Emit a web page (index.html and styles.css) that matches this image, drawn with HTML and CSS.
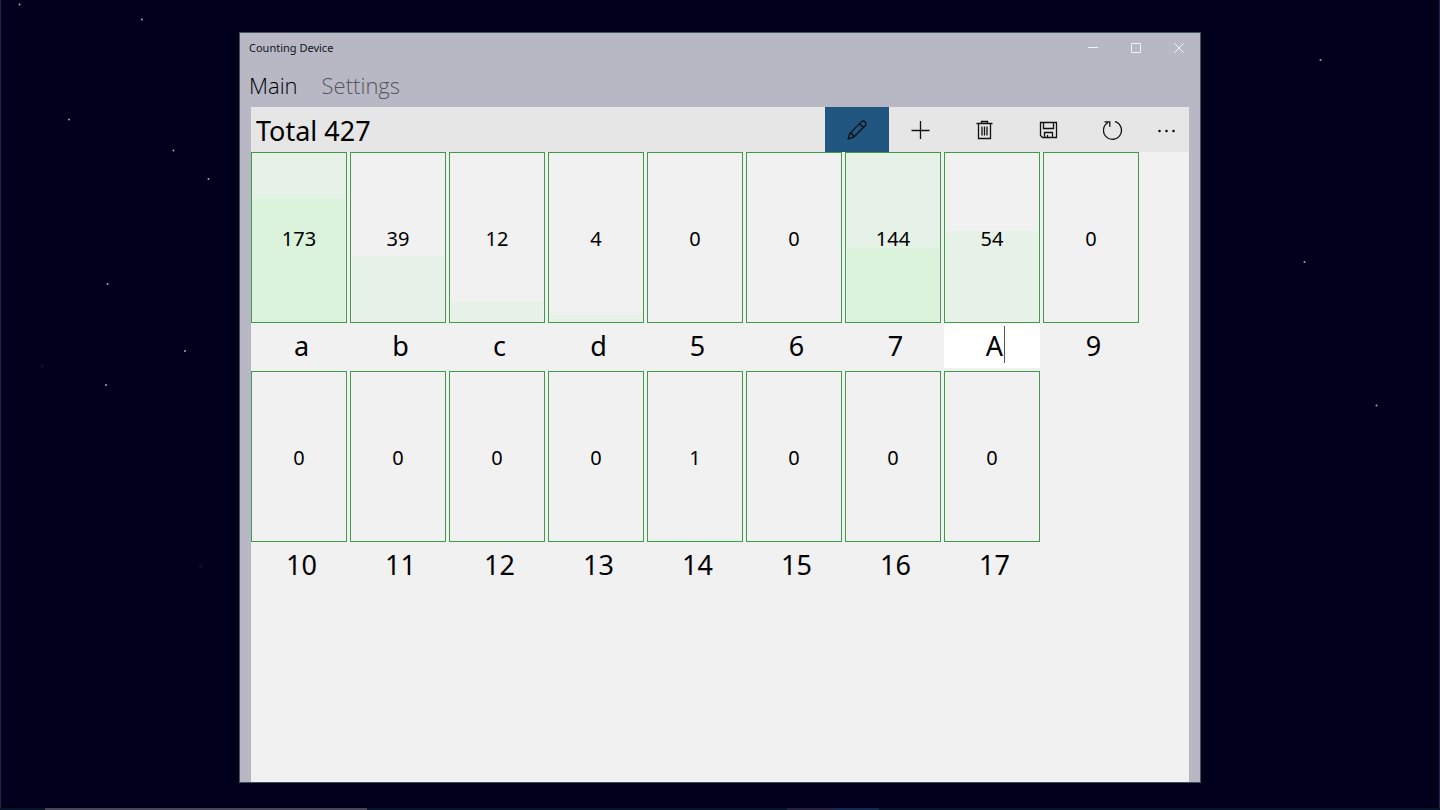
FILE: index.html
```html
<!DOCTYPE html>
<html lang="en">
<head>
    <meta charset="UTF-8">
    <meta name="viewport" content="width=device-width, initial-scale=1.0">
    <title>Counting Device</title>
    <link rel="stylesheet" href="styles.css">
</head>
<body>

<svg class="stars" viewBox="0 0 1440 810" preserveAspectRatio="xMidYMid slice" aria-hidden="true">
    <circle cx="19.5" cy="4.5" r="1"/>
    <circle cx="142" cy="19.5" r="1"/>
    <circle cx="69" cy="119.5" r="1"/>
    <circle cx="173.5" cy="150.5" r="1"/>
    <circle cx="208.5" cy="179" r="1"/>
    <circle cx="107.5" cy="284" r="1"/>
    <circle cx="185" cy="351" r="1"/>
    <circle cx="106" cy="385" r="1"/>
    <circle cx="1320.5" cy="60" r="1"/>
    <circle cx="1304.5" cy="262" r="1"/>
    <circle cx="1376.5" cy="405.5" r="1"/>
    <circle class="dim" cx="42" cy="366" r="2"/>
    <circle class="dim" cx="201" cy="566" r="2"/>
</svg>

<div class="window">
    <header class="titlebar">
        <h1>Counting Device</h1>
        <div class="caption-buttons">
            <button type="button" aria-label="Minimize">
                <svg width="10" height="10" viewBox="0 0 10 10"><path d="M0 4.500h10"/></svg>
            </button>
            <button type="button" aria-label="Maximize">
                <svg width="10" height="10" viewBox="0 0 10 10"><path d="M.5 .5h9v9h-9z"/></svg>
            </button>
            <button type="button" aria-label="Close">
                <svg width="10" height="10" viewBox="0 0 10 10"><path d="M.5 .5l9 9M9.5 .5l-9 9"/></svg>
            </button>
        </div>
    </header>

    <nav class="tabs">
        <a href="#main" class="active">Main</a>
        <a href="#settings">Settings</a>
    </nav>

    <main class="panel" id="main">
        <div class="toolbar">
            <h2>Total <span id="total">0</span></h2>
            <button type="button" class="tool selected" aria-label="Edit">
                <svg width="20" height="20" viewBox="0 0 20 20"><path d="M1.200 18.800l1.500-5.300L14.300 1.900a2.600 2.600 0 0 1 3.800 3.800L6.500 17.300zM12.500 3.700l3.800 3.800M2.700 13.500c2.300 0 3.800 1.500 3.800 3.800"/></svg>
            </button>
            <button type="button" class="tool" aria-label="Add">
                <svg width="20" height="20" viewBox="0 0 20 20"><path d="M.5 10.500h18M9.500 1v18"/></svg>
            </button>
            <button type="button" class="tool" aria-label="Delete">
                <svg width="20" height="20" viewBox="0 0 20 20"><path d="M1.500 3.500h16M6.500 3.500v-2h6v2M3.500 3.500v15h12v-15M7 6.500v9M9.500 6.500v9M12 6.500v9"/></svg>
            </button>
            <button type="button" class="tool" aria-label="Save">
                <svg width="20" height="20" viewBox="0 0 20 20"><path d="M1.500 2.500h16v15h-14l-2-2zM4.500 2.500v6h10v-6M5.500 17.500v-5h8v5M8.500 17.500v-2.500"/></svg>
            </button>
            <button type="button" class="tool" aria-label="Reset">
                <svg width="20" height="20" viewBox="0 0 20 20"><path d="M12 1.700a9 9 0 1 1-7 .8M1.500 1.800h5.300v5"/></svg>
            </button>
            <button type="button" class="tool more" aria-label="More">
                <svg width="20" height="20" viewBox="0 0 20 20"><circle cx="2.500" cy="11" r="1.300"/><circle cx="9.500" cy="11" r="1.300"/><circle cx="16.500" cy="11" r="1.300"/></svg>
            </button>
        </div>

        <div class="counters" id="counters"></div>
    </main>
</div>

<div class="taskbar" aria-hidden="true">
    <span class="search"></span>
    <span class="app"></span>
    <span class="app running"></span>
</div>

<script>
    const counters = [
        { label: "a", count: 173 },
        { label: "b", count: 39 },
        { label: "c", count: 12 },
        { label: "d", count: 4 },
        { label: "5", count: 0 },
        { label: "6", count: 0 },
        { label: "7", count: 144 },
        { label: "A", count: 54, editing: true },
        { label: "9", count: 0 },
        { label: "10", count: 0 },
        { label: "11", count: 0 },
        { label: "12", count: 0 },
        { label: "13", count: 0 },
        { label: "14", count: 1 },
        { label: "15", count: 0 },
        { label: "16", count: 0 },
        { label: "17", count: 0 }
    ];

    // every hundred fills the whole box once, the rest is drawn on top
    function renderCounters() {
        const list = document.getElementById("counters");
        list.innerHTML = "";
        counters.forEach((counter, i) => {
            const full = counter.count >= 100;
            const element = document.createElement("div");
            element.className = "counter" + (counter.editing ? " editing" : "");
            element.innerHTML = `
                <button type="button" class="box ${full ? "full" : ""}" onclick="increment(${i})" aria-labelledby="label-${i} count-${i}">
                    <span class="fill" style="height: ${counter.count % 100}%"></span>
                    <span class="count" id="count-${i}">${counter.count}</span>
                </button>
                <div class="name">
                    <input type="text" id="label-${i}" value="${counter.label}" aria-label="Counter name">
                    ${counter.editing ? '<span class="caret"></span>' : ""}
                </div>
            `;
            list.appendChild(element);
        });
        updateTotal();
    }

    function increment(i) {
        counters[i].count++;
        renderCounters();
    }

    function updateTotal() {
        const total = counters.reduce((sum, counter) => sum + counter.count, 0);
        document.getElementById("total").innerText = total;
    }

    renderCounters();
</script>

</body>
</html>
```
FILE: styles.css
```css
* {
    box-sizing: border-box;
}
body {
    margin: 0;
    min-height: 100vh;
    padding: 32px 238px 27px;
    display: flex;
    background: #00001c;
    border-left: 1px solid #22244a;
    border-right: 1px solid #22244a;
    font-family: "Segoe UI", "Noto Sans", "Open Sans", sans-serif;
    color: #000;
}
button,
input {
    font: inherit;
    color: inherit;
    margin: 0;
    padding: 0;
    border: none;
    border-radius: 0;
    background: none;
}
.stars {
    position: fixed;
    top: 0;
    left: 0;
    width: 100%;
    height: 100%;
    z-index: -1;
    fill: #a5a5bd;
}
.stars .dim {
    fill: #0c0c26;
}

/* window frame */
.window {
    flex: 1;
    min-width: 0;
    display: flex;
    flex-direction: column;
    background: #b7b8c3;
    border: 1px solid #44505f;
}
.titlebar {
    display: flex;
    justify-content: space-between;
    height: 29px;
    padding-left: 9px;
}
.titlebar h1 {
    margin: 0;
    font-size: 11px;
    font-weight: 400;
    line-height: 29px;
    color: #14141c;
}
.caption-buttons {
    display: flex;
}
.caption-buttons button {
    width: 43px;
    display: flex;
    align-items: center;
    justify-content: center;
}
.caption-buttons svg {
    fill: none;
    stroke: #f4f4f8;
}
.tabs {
    display: flex;
    gap: 24px;
    height: 45px;
    padding-left: 9px;
    font-family: "Segoe UI", "Open Sans", sans-serif;
    font-size: 22px;
    font-weight: 300;
    line-height: 46px;
}
.tabs a {
    color: #56555f;
    text-decoration: none;
}
.tabs a.active {
    color: #000;
}

/* content */
.panel {
    flex: 1;
    margin: 0 11px;
    background: #f1f1f1;
}
.toolbar {
    display: flex;
    height: 45px;
    background: #e6e6e6;
}
.toolbar h2 {
    flex: 1;
    margin: 0;
    padding-left: 5px;
    font-size: 27px;
    font-weight: 400;
    line-height: 48px;
}
.tool {
    width: 64px;
    display: flex;
    align-items: center;
    justify-content: center;
}
.tool svg {
    fill: none;
    stroke: #111;
    stroke-width: 1.3;
}
.tool.selected {
    background: #20567f;
}
.tool.more {
    width: 44px;
}
.tool.more svg {
    fill: #111;
    stroke: none;
}
.counters {
    display: flex;
    flex-wrap: wrap;
    gap: 3px;
}
.counter {
    width: 96px;
}
.box {
    position: relative;
    display: flex;
    align-items: center;
    justify-content: center;
    width: 100%;
    height: 171px;
    padding-top: 1px;
    border: 1px solid #3f9a49;
    font-size: 20px;
}
.fill {
    position: absolute;
    left: 1px;
    right: 1px;
    bottom: 0;
    background: #e6f2e7;
}
.full {
    background: #e6f2e7;
}
.full .fill {
    background: #daf3da;
}
.count {
    position: relative;
}
.name {
    position: relative;
    height: 45px;
}
.name input {
    display: block;
    width: 100%;
    height: 100%;
    padding: 0 0 0 5px;
    font-size: 27px;
    text-align: center;
}
.editing .name {
    background: #fff;
}
.caret {
    position: absolute;
    top: 3px;
    left: 60px;
    width: 1px;
    height: 37px;
    background: #555;
}

/* top edge of the taskbar */
.taskbar {
    position: fixed;
    left: 0;
    right: 0;
    bottom: 0;
    display: flex;
    height: 2px;
    padding-left: 45px;
    background: #081428;
}
.search {
    width: 322px;
    margin-right: 420px;
    background: #454558;
}
.app {
    width: 46px;
    background: #22223a;
}
.app.running {
    background: #12284e;
}

@media (max-width: 1100px) {
    body {
        padding-left: 24px;
        padding-right: 24px;
    }
}
```
